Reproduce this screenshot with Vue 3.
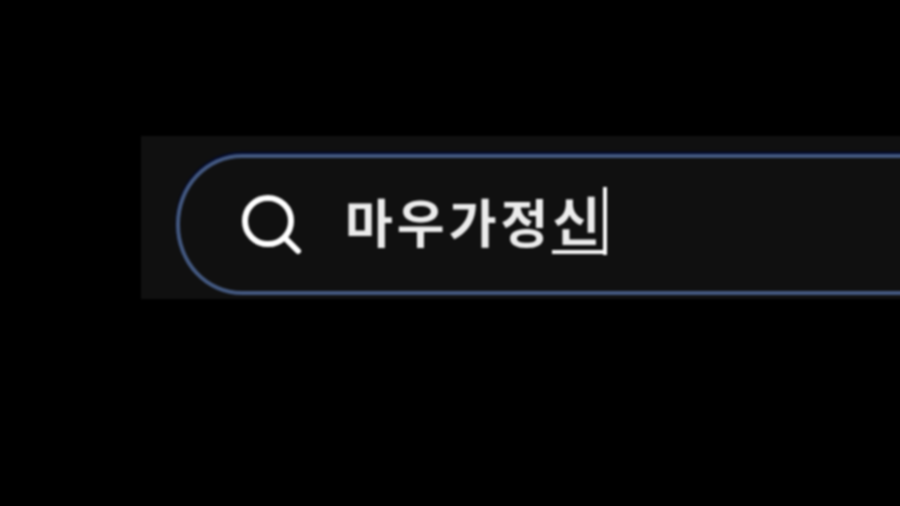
<script setup>
const text = '마우가정'
const composing = '신'
</script>

<template>
  <div class="page">
    <div class="panel">
      <div class="field">
        <svg class="icon" viewBox="0 0 62 62" fill="none" stroke="#fff" stroke-width="6" stroke-linecap="round">
          <circle cx="27" cy="27" r="23" />
          <path d="M46 46 L57 57" />
        </svg>
        <div class="text">{{ text }}<span class="comp">{{ composing }}</span><span class="caret"></span></div>
      </div>
    </div>
  </div>
</template>

<style scoped>
.page {
  width: 900px;
  height: 506px;
  box-sizing: border-box;
  background: #000;
  padding: 136px 0 0 141px;
  overflow: hidden;
}
.panel {
  width: 780px;
  height: 163px;
  box-sizing: border-box;
  background: #101010;
  padding: 18px 0 0 35px;
  filter: blur(0.9px);
}
.field {
  width: 800px;
  height: 141px;
  box-sizing: border-box;
  border: 4px solid #43587f;
  border-right: none;
  border-radius: 66px 0 0 66px / 70px 0 0 70px;
  background: #101010;
  box-shadow: 0 -2px 2px #000a33;
  display: flex;
  align-items: center;
  padding-left: 61px;
}
.icon {
  width: 62px;
  height: 62px;
  flex: none;
}
.text {
  margin-left: 42px;
  margin-top: -7px;
  display: flex;
  align-items: center;
  color: #ececec;
  font-family: "Noto Sans CJK KR", sans-serif;
  font-size: 52px;
  font-weight: 700;
  letter-spacing: 4px;
  line-height: 72px;
}
.comp {
  border-bottom: 4px solid #f4f4f4;
  line-height: 62px;
  margin-right: -1px;
}
.caret {
  width: 4px;
  height: 68px;
  background: #f8f8f8;
}
</style>
